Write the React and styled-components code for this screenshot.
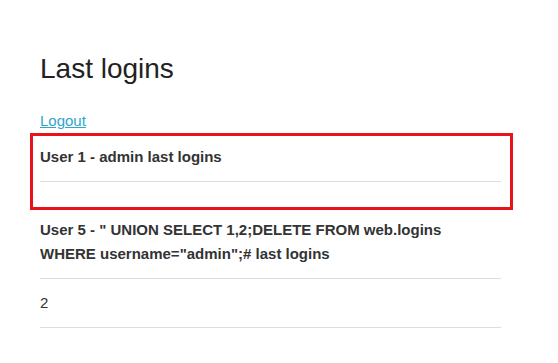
import React from "react";
//styles
import styled, { createGlobalStyle } from "styled-components";

const logins = [
  { title: "User 1 - admin last logins", rows: [""], marked: true },
  {
    title: (
      <>
        User 5 - " UNION SELECT 1,2;DELETE FROM web.logins
        <br />
        WHERE username="admin";# last logins
      </>
    ),
    rows: ["2"],
  },
];

const App = () => {
  return (
    <>
      <GlobalStyle />
      <StyledPage>
        <StyledTitle>Last logins</StyledTitle>
        <StyledLink href="#">Logout</StyledLink>
        {logins.map((item, i) => (
          <StyledBlock key={i} marked={item.marked}>
            <StyledTable>
              <thead>
                <tr>
                  <StyledTh>{item.title}</StyledTh>
                </tr>
              </thead>
              <tbody>
                {item.rows.map((row, j) => (
                  <tr key={j}>
                    <StyledTd empty={row === ""}>{row}</StyledTd>
                  </tr>
                ))}
              </tbody>
            </StyledTable>
          </StyledBlock>
        ))}
      </StyledPage>
    </>
  );
};

//Styled Components
const GlobalStyle = createGlobalStyle`
  body {
    margin: 0;
    background: #fff;
    font-family: "Liberation Sans", Arial, sans-serif;
    color: #333;
  }
`;

const StyledPage = styled.div`
  width: 461px;
  padding: 51px 40px 0;
`;

const StyledTitle = styled.h1`
  margin: 0 0 22px;
  font-size: 28px;
  font-weight: 300;
  line-height: 36px;
  color: #222;
`;

const StyledLink = styled.a`
  display: block;
  width: max-content;
  font-size: 15px;
  line-height: 24px;
  color: #2fa6cc;
`;

const StyledBlock = styled.div`
  position: relative;
  ${({ marked }) =>
    marked &&
    `
    &::after {
      content: "";
      position: absolute;
      left: -10px;
      right: -12px;
      top: 0;
      bottom: -4px;
      border: 3px solid #e8121b;
      pointer-events: none;
    }
  `}
`;

const StyledTable = styled.table`
  width: 100%;
  border-collapse: collapse;
  font-size: 15px;
  line-height: 24px;
`;

const StyledTh = styled.th`
  padding: 12px 0;
  text-align: left;
  font-weight: bold;
  color: #333;
  border-bottom: 1px solid #ddd;
`;

const StyledTd = styled.td`
  padding: 12px 0;
  line-height: ${({ empty }) => (empty ? "0" : "24px")};
  border-bottom: ${({ empty }) => (empty ? "none" : "1px solid #ddd")};
  color: #333;
`;

export default App;
